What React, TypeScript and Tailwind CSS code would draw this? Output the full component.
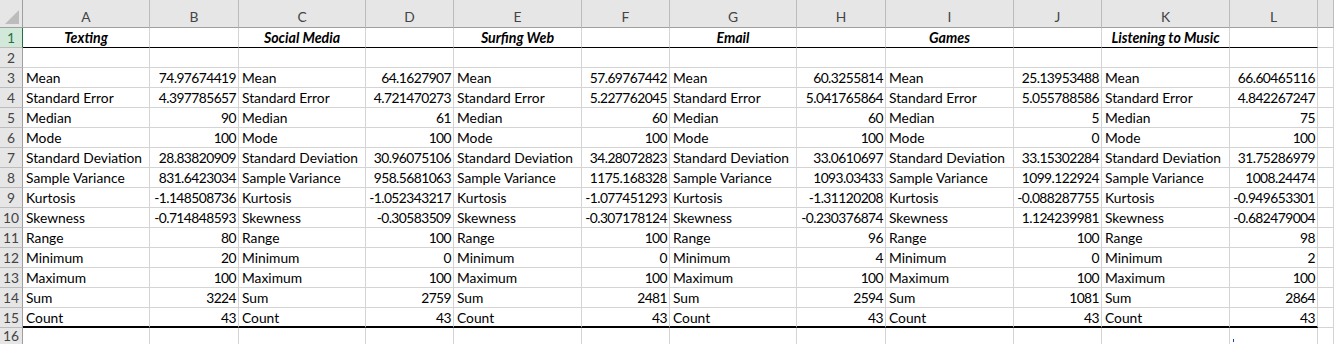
import React from "react";

const cols = ["A", "B", "C", "D", "E", "F", "G", "H", "I", "J", "K", "L", "M"];
const titles = ["Texting", "Social Media", "Surfing Web", "Email", "Games", "Listening to Music"];
const labels = [
  "Mean",
  "Standard Error",
  "Median",
  "Mode",
  "Standard Deviation",
  "Sample Variance",
  "Kurtosis",
  "Skewness",
  "Range",
  "Minimum",
  "Maximum",
  "Sum",
  "Count",
];
const data: string[][] = [
  ["74.97674419", "64.1627907", "57.69767442", "60.3255814", "25.13953488", "66.60465116"],
  ["4.397785657", "4.721470273", "5.227762045", "5.041765864", "5.055788586", "4.842267247"],
  ["90", "61", "60", "60", "5", "75"],
  ["100", "100", "100", "100", "0", "100"],
  ["28.83820909", "30.96075106", "34.28072823", "33.0610697", "33.15302284", "31.75286979"],
  ["831.6423034", "958.5681063", "1175.168328", "1093.03433", "1099.122924", "1008.24474"],
  ["-1.148508736", "-1.052343217", "-1.077451293", "-1.31120208", "-0.088287755", "-0.949653301"],
  ["-0.714848593", "-0.30583509", "-0.307178124", "-0.230376874", "1.124239981", "-0.682479004"],
  ["80", "100", "100", "96", "100", "98"],
  ["20", "0", "0", "4", "0", "2"],
  ["100", "100", "100", "100", "100", "100"],
  ["3224", "2759", "2481", "2594", "1081", "2864"],
  ["43", "43", "43", "43", "43", "43"],
];

const gridCols =
  "grid grid-cols-[23px_127px_89px_127px_88px_128px_88px_127px_89px_128px_88px_128px_88px_1fr]";

function RowHead({ n, active, raise }: { n: number; active?: boolean; raise?: boolean }) {
  return (
    <div
      className={
        "flex items-center justify-center border-r border-b text-[13.8px] leading-none " +
        (raise ? "pb-[4px] " : "") +
        (active
          ? "bg-[#d2e8d9] text-[#217346] border-r-[#217346] border-b-[#bcbcbc]"
          : "bg-[#e6e6e6] text-[#444444] border-r-[#9f9f9f] border-b-[#bcbcbc]")
      }
    >
      {n}
    </div>
  );
}

function Cell({
  children,
  align = "left",
  bottom = "normal",
  className = "",
}: {
  children?: React.ReactNode;
  align?: "left" | "right" | "center";
  bottom?: "normal" | "thin" | "thick";
  className?: string;
}) {
  const a =
    align === "right"
      ? "justify-end pr-[2px] tracking-[-0.55px]"
      : align === "center"
      ? "justify-center"
      : "justify-start pl-[3px]";
  const b =
    bottom === "thin"
      ? "border-b border-b-black"
      : bottom === "thick"
      ? "border-b-2 border-b-black"
      : "border-b border-b-[#d4d4d4]";
  return (
    <div
      className={
        "flex items-center pt-[1px] overflow-visible whitespace-nowrap border-r border-r-[#d4d4d4] text-[13.8px] leading-none text-black " +
        a +
        " " +
        b +
        " " +
        className
      }
    >
      {children}
    </div>
  );
}

export default function App() {
  return (
    <div
      className="w-[1334px] h-[344px] overflow-hidden bg-white"
      style={{ fontFamily: "Lato, 'Liberation Sans', sans-serif" }}
    >
      {/* column header */}
      <div className={gridCols + " h-[28px]"}>
        <div className="relative bg-[#e6e6e6] border-r border-b border-r-[#9f9f9f] border-b-[#9f9f9f]">
          <div className="absolute right-[3px] bottom-[3px] w-0 h-0 border-l-[14px] border-l-transparent border-b-[14px] border-b-[#bcbcbc]" />
        </div>
        {cols.map((c) => (
          <div
            key={c}
            className="flex items-center justify-center pt-[6px] bg-[#e6e6e6] border-r border-b border-r-[#bcbcbc] border-b-[#9f9f9f] text-[13.8px] leading-none text-[#444444]"
          >
            {c === "M" ? "" : c}
          </div>
        ))}
      </div>

      {/* row 1 */}
      <div className={gridCols + " h-[20px]"}>
        <RowHead n={1} active />
        {cols.map((c, i) => {
          if (c === "M") return <Cell key={c} />;
          const isTitle = i % 2 === 0;
          return (
            <Cell key={c} align="center" bottom="thin" className="font-bold italic text-[14.2px]">
              {isTitle ? titles[i / 2] : ""}
            </Cell>
          );
        })}
      </div>

      {/* row 2 */}
      <div className={gridCols + " h-[20px]"}>
        <RowHead n={2} />
        {cols.map((c) => (
          <Cell key={c} />
        ))}
      </div>

      {labels.map((label, r) => (
        <div key={label} className={gridCols + " h-[20px]"}>
          <RowHead n={r + 3} />
          {cols.map((c, i) => {
            if (c === "M") return <Cell key={c} />;
            const bottom = r === labels.length - 1 ? "thick" : "normal";
            if (i % 2 === 0) {
              return (
                <Cell key={c} bottom={bottom}>
                  {label}
                </Cell>
              );
            }
            return (
              <Cell key={c} align="right" bottom={bottom}>
                {data[r][(i - 1) / 2]}
              </Cell>
            );
          })}
        </div>
      ))}

      {/* row 16 */}
      <div className={gridCols + " h-[20px]"}>
        <RowHead n={16} raise />
        {cols.map((c) => (
          <Cell key={c} className={c === "L" ? "relative" : ""}>
            {c === "L" ? <span className="absolute left-[3px] top-[11px] w-[1px] h-[3px] bg-[#1f3f9f]" /> : null}
          </Cell>
        ))}
      </div>
    </div>
  );
}
